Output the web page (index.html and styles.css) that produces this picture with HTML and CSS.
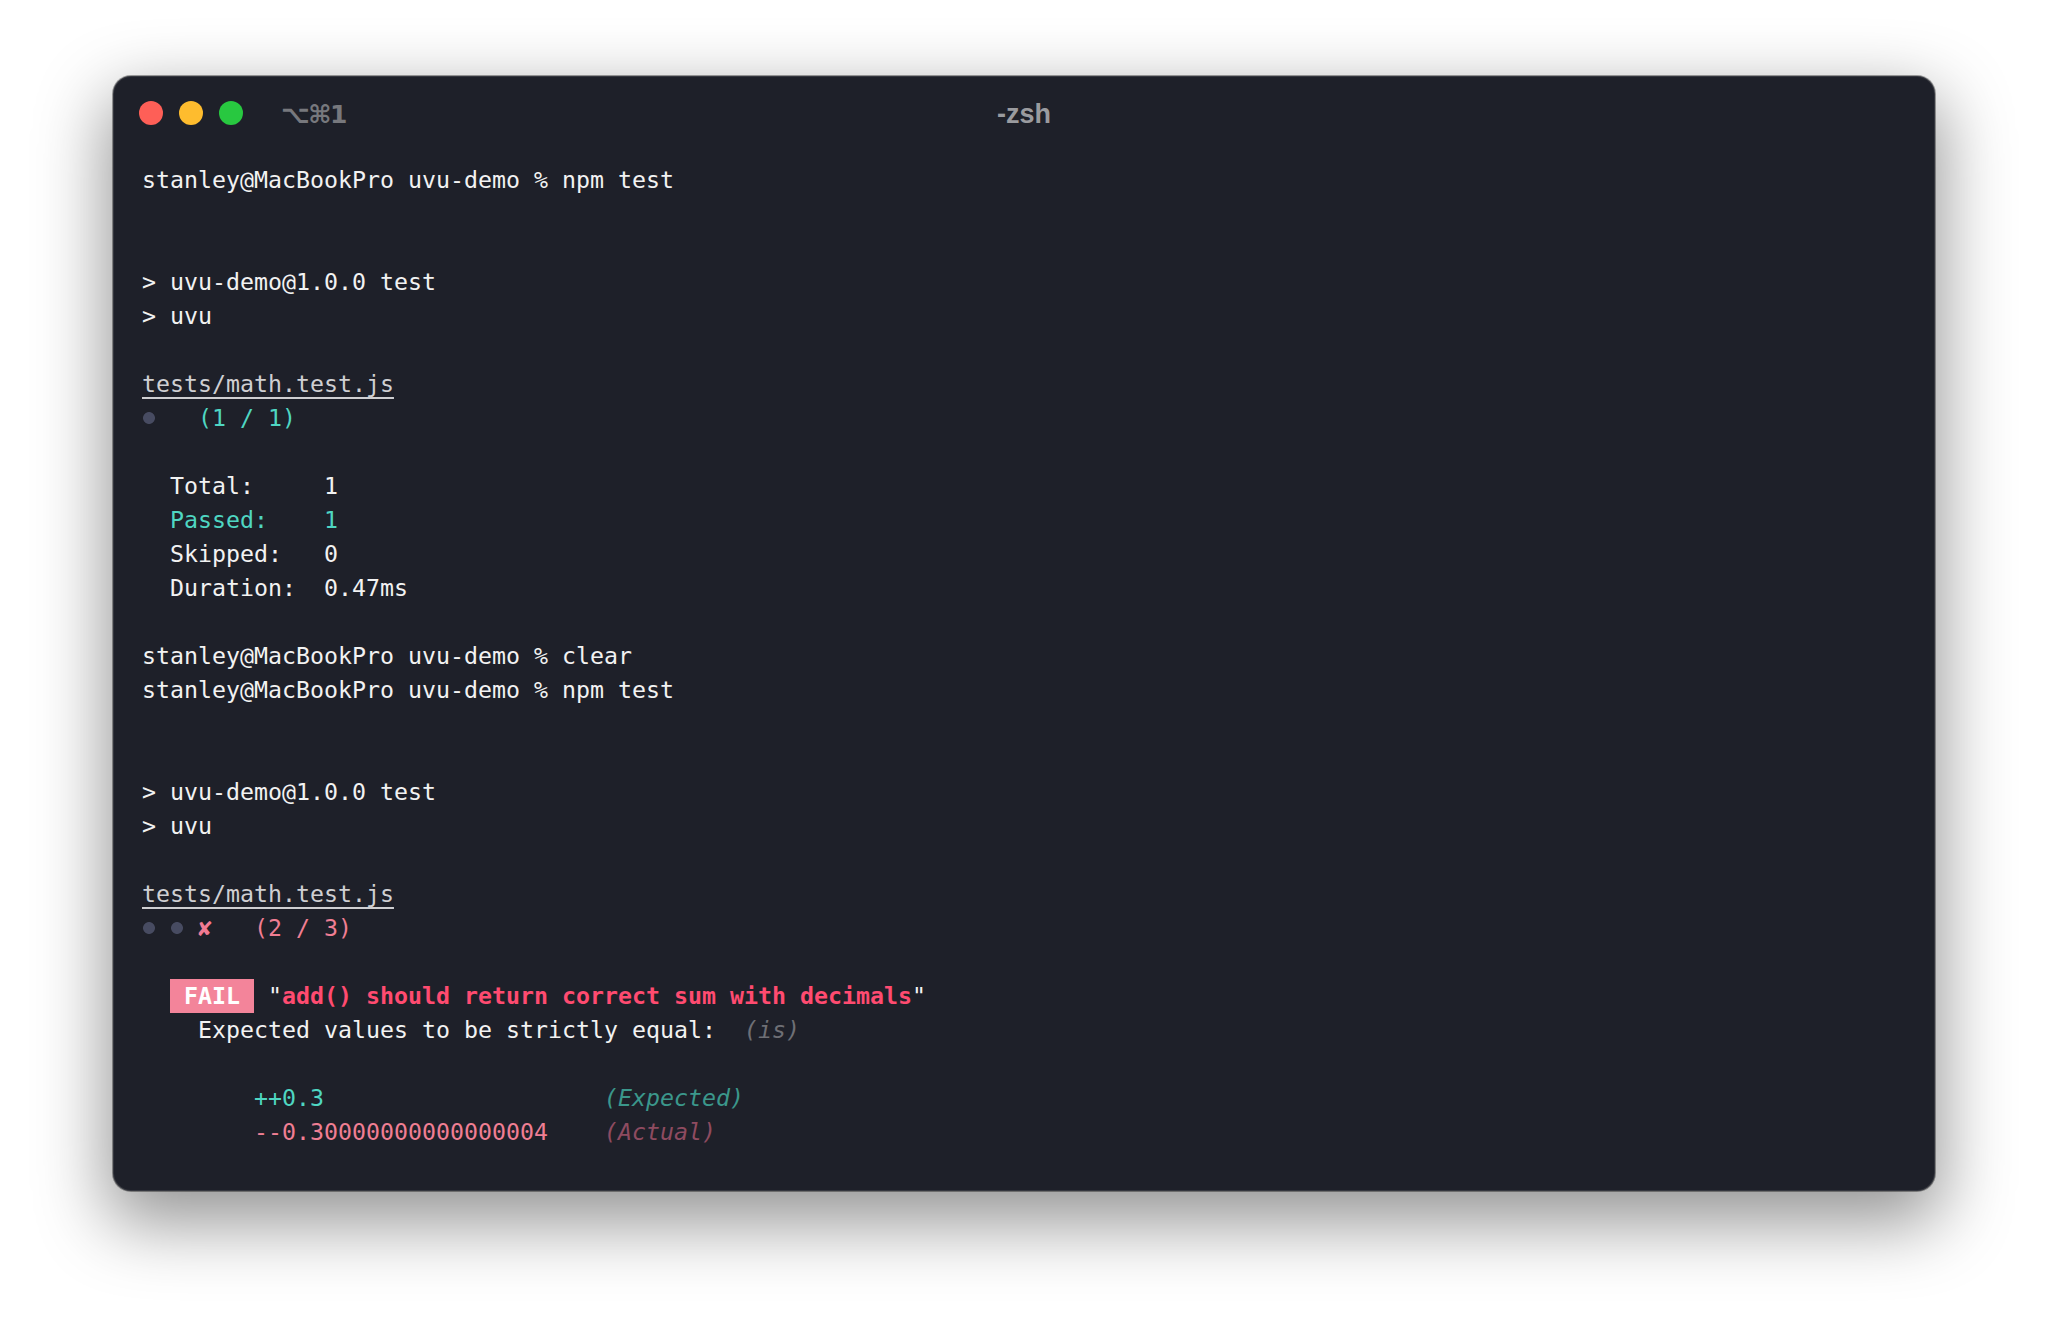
FILE: index.html
```html
<!DOCTYPE html>
<html lang="en">
<head>
<meta charset="utf-8">
<title>-zsh</title>
<link rel="stylesheet" href="styles.css">
</head>
<body>
<div class="window">
  <div class="titlebar">
    <div class="lights">
      <span class="light red"></span>
      <span class="light yellow"></span>
      <span class="light green"></span>
    </div>
    <div class="shortcut">⌥⌘1</div>
    <div class="title">-zsh</div>
  </div>
  <div class="term">
    <div class="line">stanley@MacBookPro uvu-demo % npm test</div>
    <div class="line"></div>
    <div class="line"></div>
    <div class="line">&gt; uvu-demo@1.0.0 test</div>
    <div class="line">&gt; uvu</div>
    <div class="line"></div>
    <div class="line"><span class="file">tests/math.test.js</span></div>
    <div class="line"><span class="dot"></span>   <span class="ok">(1 / 1)</span></div>
    <div class="line"></div>
    <div class="line">  Total:     1</div>
    <div class="line ok">  Passed:    1</div>
    <div class="line">  Skipped:   0</div>
    <div class="line">  Duration:  0.47ms</div>
    <div class="line"></div>
    <div class="line">stanley@MacBookPro uvu-demo % clear</div>
    <div class="line">stanley@MacBookPro uvu-demo % npm test</div>
    <div class="line"></div>
    <div class="line"></div>
    <div class="line">&gt; uvu-demo@1.0.0 test</div>
    <div class="line">&gt; uvu</div>
    <div class="line"></div>
    <div class="line"><span class="file">tests/math.test.js</span></div>
    <div class="line"><span class="dot"></span> <span class="dot"></span> <span class="cross">✘</span>   <span class="bad">(2 / 3)</span></div>
    <div class="line"></div>
    <div class="line">  <span class="badge"> FAIL </span> "<span class="err">add() should return correct sum with decimals</span>"</div>
    <div class="line">    Expected values to be strictly equal:  <span class="muted">(is)</span></div>
    <div class="line"></div>
    <div class="line">        <span class="ok">++0.3</span>                    <span class="ok-dim">(Expected)</span></div>
    <div class="line">        <span class="bad">--0.30000000000000004</span>    <span class="bad-dim">(Actual)</span></div>
  </div>
</div>
</body>
</html>
```

FILE: styles.css
```css
html, body {
  margin: 0;
  background: #ffffff;
}

body {
  padding: 76px 113px 0;
  height: 1340px;
  box-sizing: border-box;
  overflow: hidden;
}

.window {
  height: 1115px;
  background: #1e2029;
  border-radius: 18px;
  box-shadow:
    0 0 0 1px rgba(0, 0, 0, 0.35),
    inset 0 0 0 1px rgba(255, 255, 255, 0.10),
    0 26px 70px 6px rgba(0, 0, 0, 0.42);
  display: flex;
  flex-direction: column;
}

.titlebar {
  height: 74px;
  display: flex;
  align-items: center;
  padding-left: 26px;
  position: relative;
}

.lights {
  display: flex;
  gap: 16px;
}

.light {
  width: 24px;
  height: 24px;
  border-radius: 50%;
}

.red { background: #fe5f57; }
.yellow { background: #febc2e; }
.green { background: #28c840; }

.shortcut {
  margin-left: 38px;
  margin-top: 2px;
  font-family: "DejaVu Sans", sans-serif;
  font-weight: bold;
  font-size: 25px;
  color: #77787d;
  letter-spacing: -1.5px;
}

.title {
  position: absolute;
  left: 0;
  right: 0;
  top: 0;
  bottom: 0;
  display: flex;
  align-items: center;
  justify-content: center;
  padding-top: 2px;
  font-family: "Liberation Sans", Arial, sans-serif;
  font-weight: bold;
  font-size: 27px;
  color: #9a9b9f;
  pointer-events: none;
}

.term {
  padding: 13px 29px 0;
  font-family: "DejaVu Sans Mono", monospace;
  font-size: 23.25px;
  color: #f2f2f2;
}

.line {
  height: 34px;
  line-height: 34px;
  white-space: pre;
}

.file {
  color: #cfcfd2;
  text-decoration: underline;
  text-decoration-thickness: 2px;
  text-underline-offset: 5px;
}

.dot {
  display: inline-block;
  width: 14px;
  height: 34px;
  vertical-align: top;
  background: radial-gradient(circle at 50% 50%, #474b61 5.5px, rgba(71, 75, 97, 0) 6.3px);
}

.ok { color: #4fd6c2; }
.ok-dim { color: #3b978b; font-style: italic; }
.bad { color: #f07e93; }
.bad-dim { color: #8e4b60; font-style: italic; }
.cross { color: #f27b93; font-weight: bold; }
.muted { color: #6e6f75; font-style: italic; }

.badge {
  display: inline-block;
  height: 34px;
  vertical-align: top;
  background: #f3849a;
  color: #ffffff;
  font-weight: bold;
}

.err {
  color: #ff4b70;
  font-weight: bold;
}
```
